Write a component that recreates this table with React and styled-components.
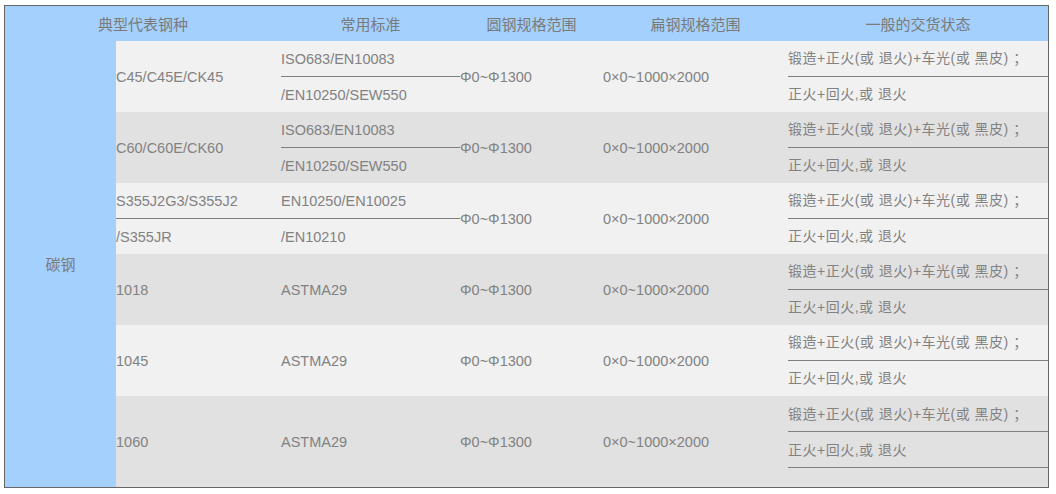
import React from "react";
import styled, { createGlobalStyle } from "styled-components";

const rows = [
  { type: ["C45/C45E/CK45"], std: ["ISO683/EN10083", "/EN10250/SEW550"] },
  { type: ["C60/C60E/CK60"], std: ["ISO683/EN10083", "/EN10250/SEW550"] },
  { type: ["S355J2G3/S355J2", "/S355JR"], std: ["EN10250/EN10025", "/EN10210"] },
  { type: ["1018"], std: ["ASTMA29"] },
  { type: ["1045"], std: ["ASTMA29"] },
  { type: ["1060"], std: ["ASTMA29"], last: true },
];

const states = ["锻造+正火(或 退火)+车光(或 黑皮) ；", "正火+回火,或 退火"];

function Cell({ lines, width }) {
  if (lines.length === 1) {
    return <Col $w={width}>{lines[0]}</Col>;
  }
  return (
    <Col $w={width} $split>
      <Half $line>{lines[0]}</Half>
      <Half>{lines[1]}</Half>
    </Col>
  );
}

function App() {
  return (
    <>
      <Global />
      <Table>
        <Head>
          <HeadCell $w={276}>典型代表钢种</HeadCell>
          <HeadCell $w={179}>常用标准</HeadCell>
          <HeadCell $w={143}>圆钢规格范围</HeadCell>
          <HeadCell $w={185}>扁钢规格范围</HeadCell>
          <HeadCell $grow>一般的交货状态</HeadCell>
        </Head>
        <Body>
          <Group>碳钢</Group>
          <Rows>
            {rows.map((r, i) => (
              <Row key={i} $alt={i % 2 === 1} $last={r.last}>
                <Cell lines={r.type} width={165} />
                <Cell lines={r.std} width={179} />
                <Col $w={143}>Φ0~Φ1300</Col>
                <Col $w={185}>0×0~1000×2000</Col>
                <State>
                  <StateItem $line>{states[0]}</StateItem>
                  <StateItem $line={r.last}>{states[1]}</StateItem>
                </State>
              </Row>
            ))}
          </Rows>
        </Body>
      </Table>
    </>
  );
}

const Global = createGlobalStyle`
  body {
    margin: 0;
    background: #ffffff;
    font-family: "Liberation Sans", "Noto Sans CJK SC", sans-serif;
  }
`;

const Table = styled.div`
  margin: 5px 0 0 4px;
  width: 1045px;
  box-sizing: border-box;
  border: 1px solid #666666;
  display: flex;
  flex-direction: column;
  color: #828282;
`;

const Head = styled.div`
  display: flex;
  height: 35px;
  background-color: #a3d0fd;
`;

const HeadCell = styled.div`
  display: flex;
  align-items: center;
  justify-content: center;
  flex: ${(p) => (p.$grow ? "1" : `0 0 ${p.$w}px`)};
  font-size: 15px;
  color: #7a7a7a;
  padding-bottom: 1px;
`;

const Body = styled.div`
  display: flex;
`;

const Group = styled.div`
  flex: 0 0 111px;
  display: flex;
  align-items: center;
  justify-content: center;
  background-color: #a3d0fd;
  font-size: 15px;
  color: #7a7a7a;
  padding-bottom: 2px;
`;

const Rows = styled.div`
  flex: 1;
  display: flex;
  flex-direction: column;
`;

const Row = styled.div`
  display: flex;
  height: ${(p) => (p.$last ? "91px" : "71px")};
  background-color: ${(p) => (p.$alt ? "#e1e1e1" : "#f1f1f1")};
  font-size: 14.5px;
`;

const Col = styled.div`
  flex: 0 0 ${(p) => p.$w}px;
  display: flex;
  flex-direction: ${(p) => (p.$split ? "column" : "row")};
  align-items: ${(p) => (p.$split ? "stretch" : "center")};
  white-space: nowrap;
`;

const Half = styled.div`
  height: 35px;
  display: flex;
  align-items: center;
  border-bottom: ${(p) => (p.$line ? "1px solid #7f7f7f" : "none")};
`;

const State = styled.div`
  flex: 1;
  display: flex;
  flex-direction: column;
  font-size: 14px;
  letter-spacing: 0.5px;
  white-space: nowrap;
`;

const StateItem = styled.div`
  height: 36px;
  box-sizing: border-box;
  padding-bottom: 2px;
  display: flex;
  align-items: center;
  border-bottom: ${(p) => (p.$line ? "1px solid #7f7f7f" : "none")};
`;

export default App;
